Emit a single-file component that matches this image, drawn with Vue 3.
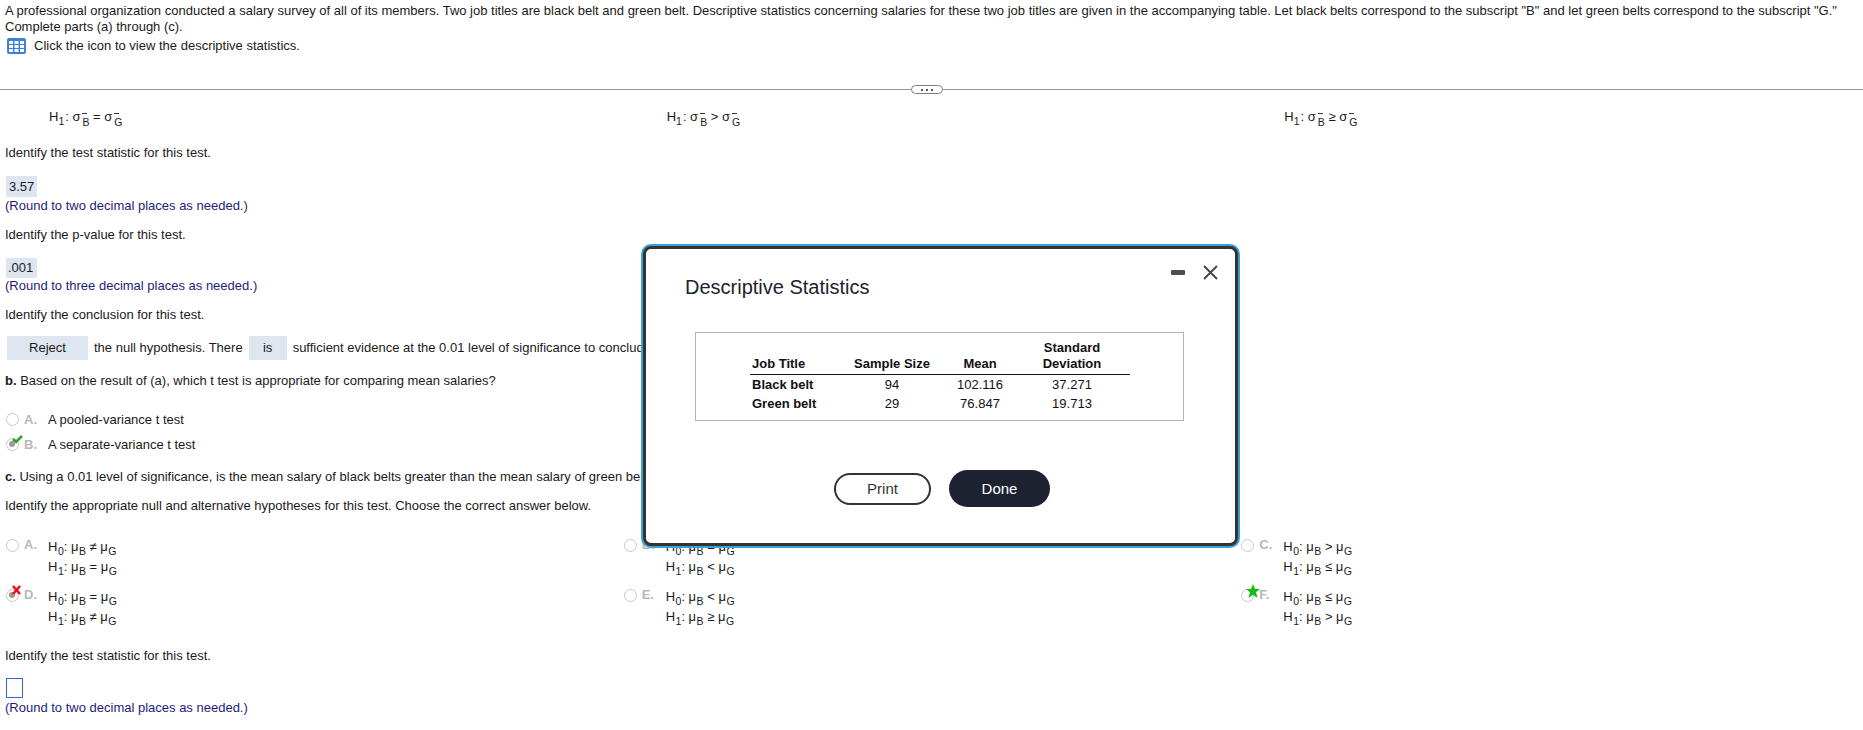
<script setup>
const h1Variances = [
  { rel: '=' },
  { rel: '>' },
  { rel: '≥' }
]

const partB = [
  { key: 'A', text: 'A pooled-variance t test', mark: '' },
  { key: 'B', text: 'A separate-variance t test', mark: 'check' }
]

const hypotheses = [
  { key: 'A', h0: '≠', h1: '=', mark: '' },
  { key: 'B', h0: '=', h1: '<', mark: '' },
  { key: 'C', h0: '>', h1: '≤', mark: '' },
  { key: 'D', h0: '=', h1: '≠', mark: 'cross' },
  { key: 'E', h0: '<', h1: '≥', mark: '' },
  { key: 'F', h0: '≤', h1: '>', mark: 'star' }
]

const stats = [
  { title: 'Black belt', n: 94, mean: '102.116', sd: '37.271' },
  { title: 'Green belt', n: 29, mean: '76.847', sd: '19.713' }
]
</script>

<template>
  <div class="page">
    <p class="intro">A professional organization conducted a salary survey of all of its members. Two job titles are black belt and green belt. Descriptive statistics concerning salaries for these two job titles are given in the accompanying table. Let black belts correspond to the subscript "B" and let green belts correspond to the subscript "G."<br />Complete parts (a) through (c).</p>
    <div class="icon-line">
      <svg class="grid-icon" width="19" height="16" viewBox="0 0 19 16">
        <rect width="19" height="16" rx="2" fill="#3f80dc" />
        <g fill="#fff">
          <rect x="2" y="3" width="4" height="3" /><rect x="7.500" y="3" width="4" height="3" /><rect x="13" y="3" width="4" height="3" />
          <rect x="2" y="7" width="4" height="3" /><rect x="7.500" y="7" width="4" height="3" /><rect x="13" y="7" width="4" height="3" />
          <rect x="2" y="11" width="4" height="3" /><rect x="7.500" y="11" width="4" height="3" /><rect x="13" y="11" width="4" height="3" />
        </g>
      </svg>
      <span>Click the icon to view the descriptive statistics.</span>
    </div>

    <div class="divider"><span class="more"><i></i><i></i><i></i></span></div>

    <div class="cols h1-row">
      <div v-for="v in h1Variances" :key="v.rel" class="h1-cell">
        H<sub class="index">1</sub>: σ<sub class="marked">B</sub> {{ v.rel }} σ<sub class="marked">G</sub>
      </div>
    </div>

    <p class="q q-stat">Identify the test statistic for this test.</p>
    <div class="answer a-stat">3.57</div>
    <p class="hint">(Round to two decimal places as needed.)</p>

    <p class="q q-p">Identify the p-value for this test.</p>
    <div class="answer a-p">.001</div>
    <p class="hint">(Round to three decimal places as needed.)</p>

    <p class="q q-p">Identify the conclusion for this test.</p>
    <div class="conclusion">
      <span class="pick pick-reject">Reject</span>
      <span>the null hypothesis. There</span>
      <span class="pick pick-is">is</span>
      <span>sufficient evidence at the 0.01 level of significance to conclude that there is a difference between the variances of the salaries for the black and green belts.</span>
    </div>

    <p class="q q-b"><b>b.</b> Based on the result of (a), which t test is appropriate for comparing mean salaries?</p>
    <div class="simple-options">
      <div v-for="o in partB" :key="o.key" class="simple-option">
        <span class="radio" :class="{ on: o.mark }">
          <svg v-if="o.mark === 'check'" class="mark mark-check" width="11" height="9" viewBox="0 0 11 9"><path d="M1 4l3 3 6-6" fill="none" stroke="#2aa52a" stroke-width="2.600" /></svg>
        </span>
        <span class="letter">{{ o.key }}.</span>
        <span>{{ o.text }}</span>
      </div>
    </div>

    <p class="q q-c"><b>c.</b> Using a 0.01 level of significance, is the mean salary of black belts greater than the mean salary of green belts?</p>
    <p class="q q-p">Identify the appropriate null and alternative hypotheses for this test. Choose the correct answer below.</p>

    <div class="cols options">
      <div v-for="o in hypotheses" :key="o.key" class="option">
        <span class="radio" :class="{ on: o.mark === 'cross' }">
          <svg v-if="o.mark === 'cross'" class="mark mark-cross" width="9" height="10" viewBox="0 0 9 10"><path d="M1 1l7 8M8 1L1 9" fill="none" stroke="#f01010" stroke-width="2.600" /></svg>
          <svg v-if="o.mark === 'star'" class="mark" width="14" height="14" viewBox="0 0 14 14"><path d="M7 0l2 5h5l-4 3.200L11.500 14 7 10.700 2.500 14 4 8.200 0 5h5z" fill="#10c010" /></svg>
        </span>
        <span class="letter">{{ o.key }}.</span>
        <div class="formula">
          <div>H<sub>0</sub>: μ<sub>B</sub> {{ o.h0 }} μ<sub>G</sub></div>
          <div>H<sub>1</sub>: μ<sub>B</sub> {{ o.h1 }} μ<sub>G</sub></div>
        </div>
      </div>
    </div>

    <p class="q q-last">Identify the test statistic for this test.</p>
    <div class="empty-input"></div>
    <p class="hint hint-last">(Round to two decimal places as needed.)</p>

    <div class="modal">
      <div class="modal-head">
        <h2>Descriptive Statistics</h2>
        <div class="controls">
          <span class="minimize"></span>
          <svg width="15" height="15" viewBox="0 0 15 15"><path d="M1 1l13 13M14 1L1 14" stroke="#3c4149" stroke-width="1.800" fill="none" /></svg>
        </div>
      </div>
      <div class="table-box">
        <table>
          <thead>
            <tr>
              <th class="left">Job Title</th>
              <th>Sample Size</th>
              <th>Mean</th>
              <th>Standard<br />Deviation</th>
            </tr>
          </thead>
          <tbody>
            <tr v-for="s in stats" :key="s.title">
              <th class="left">{{ s.title }}</th>
              <td>{{ s.n }}</td>
              <td>{{ s.mean }}</td>
              <td>{{ s.sd }}</td>
            </tr>
          </tbody>
        </table>
      </div>
      <div class="modal-actions">
        <button class="btn-print">Print</button>
        <button class="btn-done">Done</button>
      </div>
    </div>
  </div>
</template>

<style scoped>
.page {
  position: relative;
  height: 730px;
  overflow: hidden;
  box-sizing: border-box;
  padding: 3px 5px 0;
  font-family: "Liberation Sans", Arial, sans-serif;
  font-size: 13px;
  line-height: 16px;
  color: #1a1a1a;
}

p {
  margin: 0;
}

sub {
  font-size: 10.500px;
  line-height: 0;
}

.intro {
  white-space: nowrap;
}

.icon-line {
  display: flex;
  align-items: center;
  gap: 8px;
  margin-top: 3px;
  margin-left: 2px;
  height: 16px;
}

.divider {
  position: relative;
  margin: 35px -5px 0;
  border-top: 1px solid #8f939b;
}

.more {
  position: absolute;
  left: 911px;
  top: -5px;
  width: 30px;
  height: 7px;
  display: flex;
  align-items: center;
  justify-content: center;
  gap: 3px;
  background: #fff;
  border: 1px solid #7b8087;
  border-radius: 5px;
}

.more i {
  width: 2px;
  height: 2px;
  background: #555;
}

.cols {
  display: grid;
  grid-template-columns: repeat(3, 1fr);
}

.h1-row {
  margin-top: 19px;
}

.h1-cell {
  padding-left: 44px;
  white-space: nowrap;
}

.index {
  margin-right: 1px;
}

.marked {
  position: relative;
  top: 1px;
  margin-left: 2px;
}

.marked::before {
  content: '';
  position: absolute;
  left: 0;
  top: -3px;
  width: 5px;
  height: 1px;
  background: #333;
}

.q-stat {
  margin-top: 20px;
}

.answer {
  box-sizing: border-box;
  width: 31px;
  margin-left: 1px;
  background: #dde5f1;
}

.a-stat {
  margin-top: 15px;
  height: 21px;
  padding: 3px 3px;
}

.a-p {
  margin-top: 15px;
  height: 20px;
  padding: 2px 2px;
}

.hint {
  color: #1d1d78;
}

.a-stat + .hint {
  margin-top: 1px;
}

.q-p {
  margin-top: 13px;
}

.conclusion {
  display: flex;
  align-items: center;
  gap: 6px;
  margin-top: 13px;
  margin-left: 2px;
  white-space: nowrap;
}

.pick {
  display: flex;
  align-items: center;
  justify-content: center;
  flex: none;
  height: 24px;
  background: #dfe6f0;
}

.pick-reject {
  width: 81px;
}

.pick-is {
  width: 38px;
}

.q-b {
  margin-top: 13px;
}

.simple-options {
  margin-top: 18px;
}

.simple-option {
  display: flex;
  align-items: center;
  height: 25px;
}

.radio {
  position: relative;
  flex: none;
  box-sizing: border-box;
  width: 13px;
  height: 13px;
  margin-left: 1px;
  border: 1.500px solid #c9c9c9;
  border-radius: 50%;
  background: #fff;
}

.radio.on::after {
  content: '';
  position: absolute;
  left: 2px;
  top: 2px;
  width: 6px;
  height: 6px;
  border-radius: 50%;
  background: #9a9a9a;
}

.mark {
  position: absolute;
  left: 4px;
  top: -6px;
  z-index: 1;
}

.mark-check {
  left: 5px;
  top: -4px;
}

.mark-cross {
  left: 5px;
  top: -5px;
}

.letter {
  flex: none;
  width: 24px;
  margin-left: 5px;
  color: #b8b8b8;
  font-weight: bold;
}

.q-c {
  margin-top: 12px;
  white-space: nowrap;
}

.options {
  margin-top: 23px;
  row-gap: 9px;
}

.option {
  display: flex;
  align-items: flex-start;
  height: 41px;
}

.option .radio {
  margin-top: 2px;
}

.formula {
  line-height: 20px;
  white-space: nowrap;
}

.formula sub {
  margin-left: 0.500px;
}

.q-last {
  margin-top: 20px;
}

.empty-input {
  box-sizing: border-box;
  width: 17px;
  height: 20px;
  margin: 14px 0 0 1px;
  border: 1px solid #2f66d0;
}

.hint-last {
  margin-top: 2px;
}

.modal {
  position: absolute;
  left: 643px;
  top: 246px;
  box-sizing: border-box;
  width: 595px;
  height: 300px;
  background: #fff;
  border: 3px solid #333;
  border-radius: 8px;
  box-shadow: 0 0 0 2px #3b9fd8;
}

.modal-head {
  display: flex;
  justify-content: space-between;
  padding: 26px 17px 0 39px;
}

h2 {
  margin: 0;
  font-size: 20px;
  line-height: 24px;
  font-weight: normal;
  color: #1c2230;
}

.controls {
  display: flex;
  align-items: center;
  gap: 18px;
  height: 16px;
  margin-top: -11px;
}

.minimize {
  width: 14px;
  height: 5px;
  border-radius: 1px;
  background: #4a4f57;
}

.table-box {
  box-sizing: border-box;
  width: 489px;
  height: 89px;
  margin: 33px 0 0 49px;
  padding-left: 54px;
  border: 1px solid #b5b5b5;
}

table {
  border-collapse: collapse;
  margin-top: 6px;
  font-size: 13px;
  line-height: 16px;
  color: #111;
}

th, td {
  padding: 1px 0 2px;
  text-align: center;
  font-weight: normal;
}

th {
  font-weight: bold;
}

th.left {
  width: 83px;
  padding-left: 2px;
  text-align: left;
}

tbody tr:first-child th, tbody tr:first-child td {
  padding-top: 2px;
}

thead th {
  border-bottom: 1px solid #111;
  vertical-align: bottom;
  white-space: nowrap;
}

thead th:nth-child(2), tbody td:nth-child(2) {
  width: 114px;
}

thead th:nth-child(3), tbody td:nth-child(3) {
  width: 62px;
}

thead th:nth-child(4), tbody td:nth-child(4) {
  width: 116px;
  padding-left: 3px;
}

.modal-actions {
  display: flex;
  align-items: center;
  gap: 18px;
  margin: 49px 0 0 188px;
}

button {
  font-family: inherit;
  font-size: 15px;
  box-sizing: border-box;
  cursor: pointer;
}

.btn-print {
  width: 97px;
  height: 32px;
  background: #fff;
  color: #333;
  border: 2px solid #333;
  border-radius: 16px;
}

.btn-done {
  width: 101px;
  height: 37px;
  background: #1c2230;
  color: #fff;
  border: none;
  border-radius: 19px;
}
</style>

<style>
html, body {
  margin: 0;
  background: #fff;
}
</style>
